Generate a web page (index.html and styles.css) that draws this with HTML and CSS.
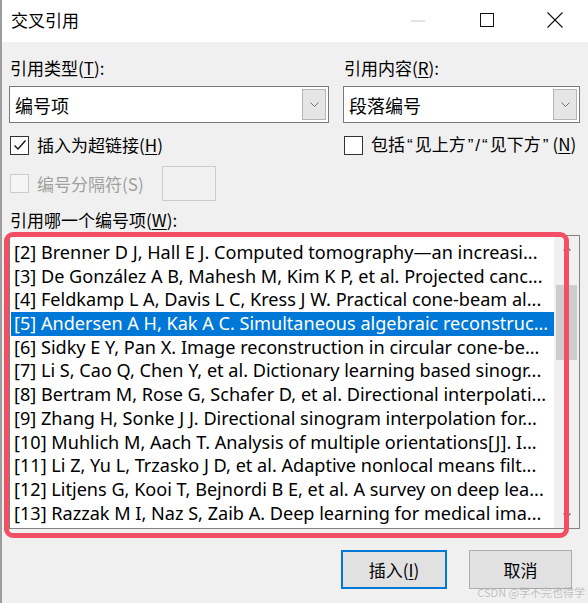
FILE: index.html
```html
<!DOCTYPE html>
<html lang="zh-CN">
<head>
<meta charset="utf-8">
<title>交叉引用</title>
<link rel="stylesheet" href="styles.css">
</head>
<body>
<div class="window">
  <div class="titlebar">
    <div class="title">交叉引用</div>
    <div class="controls">
      <div class="ctl ctl-min"><svg width="14" height="2" viewBox="0 0 14 2"><path d="M0 1H14" stroke="#c8c8c8" stroke-width="1"/></svg></div>
      <div class="ctl ctl-max"><svg width="14" height="14" viewBox="0 0 14 14"><rect x="0.5" y="0.5" width="13" height="13" fill="none" stroke="#111" stroke-width="1"/></svg></div>
      <div class="ctl ctl-close"><svg width="16" height="16" viewBox="0 0 16 16"><path d="M0.5 0.5L15.5 15.5M15.5 0.5L0.5 15.5" stroke="#111" stroke-width="1.1"/></svg></div>
    </div>
  </div>

  <div class="content">
    <div class="grid2">
      <div class="field">
        <div class="label">引用类型(<u>T</u>):</div>
        <div class="combo">
          <span class="combo-text">编号项</span>
          <span class="combo-btn"><svg width="9" height="5" viewBox="0 0 9 5"><path d="M0.5 0.5L4.5 4.5L8.5 0.5" fill="none" stroke="#707070" stroke-width="1"/></svg></span>
        </div>
      </div>
      <div class="field">
        <div class="label">引用内容(<u>R</u>):</div>
        <div class="combo">
          <span class="combo-text">段落编号</span>
          <span class="combo-btn"><svg width="9" height="5" viewBox="0 0 9 5"><path d="M0.5 0.5L4.5 4.5L8.5 0.5" fill="none" stroke="#707070" stroke-width="1"/></svg></span>
        </div>
      </div>
    </div>

    <div class="grid2 checks">
      <label class="check">
        <span class="box"><svg width="16" height="16" viewBox="0 0 16 16"><path d="M2.5 8.5L6 12L13.5 3.5" fill="none" stroke="#111" stroke-width="1.3"/></svg></span>
        <span>插入为超链接(<u>H</u>)</span>
      </label>
      <label class="check">
        <span class="box"></span>
        <span>包括<span class="q">“</span>见上方<span class="q">”</span><span class="sl">/</span><span class="q">“</span>见下方<span class="q">”</span><span class="an">(<u>N</u>)</span></span>
      </label>
    </div>

    <div class="sep-row">
      <label class="check disabled">
        <span class="box"></span>
        <span>编号分隔符(S)</span>
      </label>
      <span class="sep-input"></span>
    </div>

    <div class="label label-w">引用哪一个编号项(<u>W</u>):</div>

    <div class="listbox">
      <div class="rows">
        <div class="row">[2] Brenner D J, Hall E J. Computed tomography—an increasi...</div>
        <div class="row">[3] De González A B, Mahesh M, Kim K P, et al. Projected canc...</div>
        <div class="row">[4] Feldkamp L A, Davis L C, Kress J W. Practical cone-beam al...</div>
        <div class="row selected">[5] Andersen A H, Kak A C. Simultaneous algebraic reconstruc...</div>
        <div class="row">[6] Sidky E Y, Pan X. Image reconstruction in circular cone-be...</div>
        <div class="row">[7] Li S, Cao Q, Chen Y, et al. Dictionary learning based sinogr...</div>
        <div class="row">[8] Bertram M, Rose G, Schafer D, et al. Directional interpolati...</div>
        <div class="row">[9] Zhang H, Sonke J J. Directional sinogram interpolation for...</div>
        <div class="row">[10] Muhlich M, Aach T. Analysis of multiple orientations[J]. I...</div>
        <div class="row">[11] Li Z, Yu L, Trzasko J D, et al. Adaptive nonlocal means filt...</div>
        <div class="row">[12] Litjens G, Kooi T, Bejnordi B E, et al. A survey on deep lea...</div>
        <div class="row">[13] Razzak M I, Naz S, Zaib A. Deep learning for medical ima...</div>
      </div>
      <div class="scrollbar">
        <span class="arrow"><svg width="8" height="5" viewBox="0 0 8 5"><path d="M0.5 4.5L4 1L7.5 4.5" fill="none" stroke="#707070" stroke-width="1.2"/></svg></span>
        <span class="track"><span class="thumb"></span></span>
        <span class="arrow"><svg width="8" height="5" viewBox="0 0 8 5"><path d="M0.5 0.5L4 4L7.5 0.5" fill="none" stroke="#707070" stroke-width="1.2"/></svg></span>
      </div>
      <div class="annot"></div>
    </div>

    <div class="buttons">
      <button class="btn btn-default">插入(<u>I</u>)</button>
      <button class="btn btn-cancel">取消</button>
    </div>
  </div>
  <div class="watermark">CSDN @学不完也得学</div>
</div>
</body>
</html>
```

FILE: styles.css
```css
* { box-sizing: border-box; }
html, body { margin: 0; padding: 0; }
body {
  width: 588px;
  height: 603px;
  overflow: hidden;
  font-family: "Noto Sans CJK SC", "Noto Sans", sans-serif;
  color: #000;
}
.window {
  position: relative;
  width: 588px;
  height: 603px;
  background: #f0f0f0;
  border-left: 2px solid #9c9c9c;
}
.titlebar {
  height: 42px;
  background: #fff;
  display: flex;
  align-items: center;
  justify-content: space-between;
}
.title {
  padding-left: 9px;
  font-size: 17px;
  line-height: 22px;
  height: 22px;
  margin-bottom: 3px;
}
.controls { display: flex; height: 42px; }
.ctl { display: flex; align-items: center; justify-content: center; height: 42px; }
.ctl-min { width: 68px; }
.ctl-max { width: 70px; padding-bottom: 2px; }
.ctl-close { width: 66px; padding-bottom: 2px; }

.content { padding: 0 8px 0 7px; }
.grid2 {
  display: grid;
  grid-template-columns: 320px 237px;
  column-gap: 14px;
}
.label {
  font-size: 17px;
  line-height: 22px;
  height: 22px;
  padding-left: 1px;
  white-space: nowrap;
}
.field .label { margin-top: 15px; margin-bottom: 7px; }
.label u, .check u, .btn u { text-decoration-thickness: 1px; text-underline-offset: 2px; }

.combo {
  height: 37px;
  background: #fff;
  border: 1px solid #7a7a7a;
  display: flex;
  align-items: center;
  justify-content: space-between;
  padding: 2px 2px 2px 5px;
}
.combo-text { font-size: 18px; line-height: 22px; height: 22px; }
.combo-btn {
  width: 24px;
  height: 100%;
  background: #e5e5e5;
  border: 1px solid #b5b5b5;
  display: flex;
  align-items: center;
  justify-content: center;
}

.checks { margin-top: 11px; height: 22px; }
.check {
  display: flex;
  align-items: center;
  gap: 8px;
  font-size: 17px;
  line-height: 22px;
  height: 22px;
  padding-left: 1px;
  white-space: nowrap;
}
.q { font-family: "Liberation Sans", sans-serif; padding: 0 2px; }
.sl { font-family: "Liberation Sans", sans-serif; }
.an { padding-left: 2px; }
.box {
  width: 19px;
  height: 19px;
  border: 1px solid #333;
  background: #fff;
  display: flex;
  align-items: center;
  justify-content: center;
  flex: none;
}
.check.disabled { color: #a0a0a0; }
.check.disabled .box { border-color: #cccccc; background: #f5f5f5; }

.sep-row {
  margin-top: 10px;
  height: 35px;
  display: flex;
  align-items: center;
  gap: 18px;
}
.sep-input {
  width: 54px;
  height: 35px;
  border: 1px solid #cccccc;
  background: #f0f0f0;
}
.label-w { margin-top: 8px; }

.listbox {
  position: relative;
  margin-top: 4px;
  height: 294px;
  background: #fff;
  border: 1px solid #828282;
  display: flex;
}
.rows {
  flex: 1;
  padding: 5px 0 0 1px;
  overflow: hidden;
}
.row {
  height: 23.7px;
  line-height: 23.7px;
  font-family: "Noto Sans", sans-serif;
  font-size: 18.1px;
  padding-left: 3px;
  white-space: nowrap;
  overflow: hidden;
}
.row.selected { background: #0078d7; color: #fff; }
.scrollbar {
  width: 25px;
  flex: none;
  background: #f0f0f0;
  display: flex;
  flex-direction: column;
}
.arrow {
  height: 25px;
  display: flex;
  align-items: center;
  justify-content: center;
}
.track { flex: 1; position: relative; }
.thumb {
  position: absolute;
  left: 2px;
  right: 2px;
  top: 24px;
  height: 75px;
  background: #cdcdcd;
}
.annot {
  position: absolute;
  left: -6px;
  top: -4px;
  width: 565px;
  height: 306px;
  border: 5px solid #f24e64;
  border-radius: 9px;
  pointer-events: none;
}

.buttons {
  display: flex;
  justify-content: flex-end;
  gap: 22px;
  margin-top: 21px;
  padding-right: 8px;
}
.btn {
  height: 39px;
  background: #e1e1e1;
  font-family: "Noto Sans CJK SC", sans-serif;
  font-size: 17px;
  line-height: 22px;
  color: #000;
  padding: 0;
}
.btn-default { width: 106px; border: 2px solid #0078d7; }
.btn-cancel { width: 103px; border: 1px solid #adadad; }

.watermark {
  position: absolute;
  right: 3px;
  bottom: 4px;
  font-size: 11px;
  line-height: 13px;
  color: rgba(150, 150, 150, 0.55);
  font-family: "Noto Sans CJK SC", sans-serif;
}
```
